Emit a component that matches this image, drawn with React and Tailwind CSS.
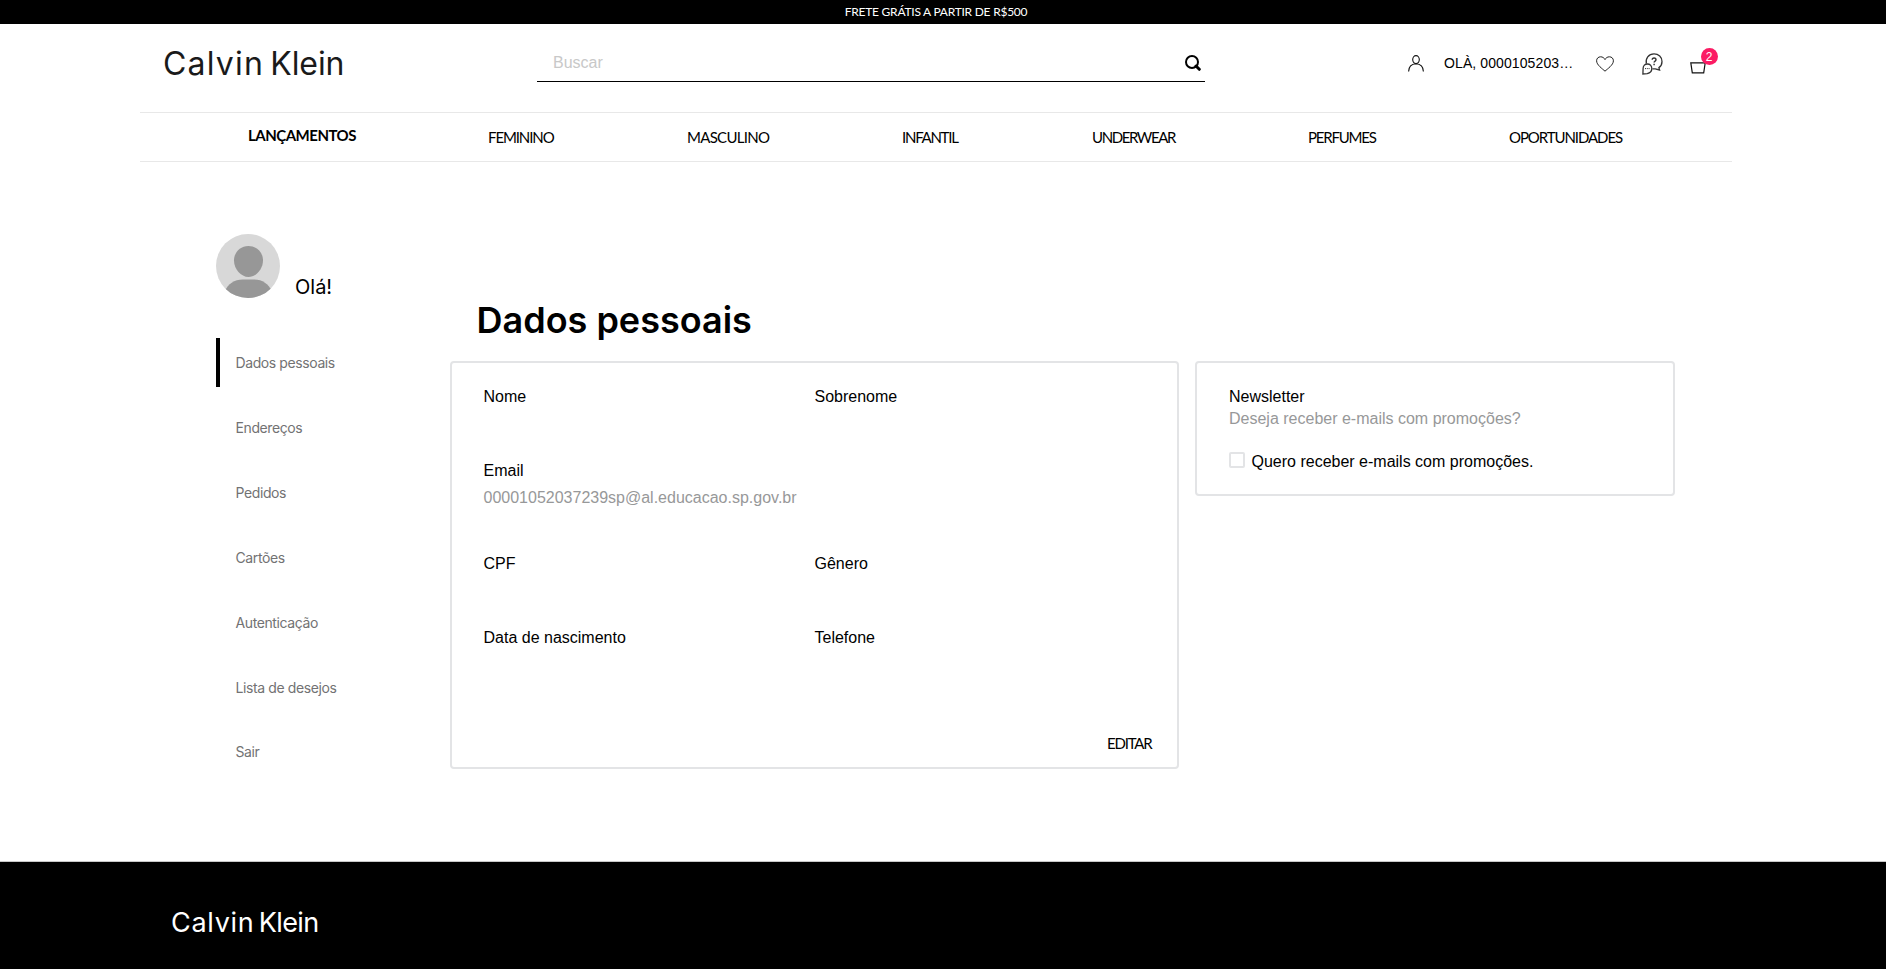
import React from 'react';

const NAV = [
  { label: 'LANÇAMENTOS', cls: 'w-[107px] font-bold tracking-[-0.5px] pb-1' },
  { label: 'FEMININO', cls: 'w-[66px] tracking-[-1.1px]' },
  { label: 'MASCULINO', cls: 'w-[82px] tracking-[-0.7px]' },
  { label: 'INFANTIL', cls: 'w-[57px] tracking-[-1.25px]' },
  { label: 'UNDERWEAR', cls: 'w-[83px] tracking-[-1.4px]' },
  { label: 'PERFUMES', cls: 'w-[68px] tracking-[-1.2px]' },
  { label: 'OPORTUNIDADES', cls: 'w-[113px] tracking-[-1.08px]' },
];

const MENU = ['Dados pessoais', 'Endereços', 'Pedidos', 'Cartões', 'Autenticação', 'Lista de desejos', 'Sair'];

function SearchIcon() {
  return (
    <svg className="h-4 w-4" viewBox="0 0 16 16" fill="none" stroke="#000">
      <circle cx="7" cy="7" r="6" strokeWidth="2" />
      <path d="M11 11 L14.3 14.3" strokeWidth="3" strokeLinecap="round" />
    </svg>
  );
}

function UserIcon() {
  return (
    <svg className="h-[17px] w-4" viewBox="0 0 16 17" fill="none" stroke="#111" strokeWidth="1.1">
      <ellipse cx="8" cy="4.6" rx="3.3" ry="4" />
      <path d="M0.6 16.5 C0.8 11.5 4 9 8 8.8 C12 9 15.2 11.5 15.4 16.5" />
    </svg>
  );
}

function HeartIcon() {
  return (
    <svg className="h-4 w-[18px]" viewBox="0 0 18 16" fill="none" stroke="#222" strokeWidth="1">
      <path d="M9 15.2 C6.5 12.8 0.6 9 0.6 4.8 C0.6 2.3 2.4 0.8 4.6 0.8 C6.6 0.8 8.2 1.9 9 3.6 C9.8 1.9 11.4 0.8 13.4 0.8 C15.6 0.8 17.4 2.3 17.4 4.8 C17.4 9 11.5 12.8 9 15.2 Z" />
    </svg>
  );
}

function HelpIcon() {
  return (
    <svg className="h-[22px] w-[21px]" viewBox="0 0 21 22" fill="none" stroke="#333" strokeWidth="1.3">
      <path d="M4.4 10.6 C3.2 5.6 6.6 0.8 12 0.8 C16.6 0.8 20 4.2 20 8.4 C20 11.2 18.8 13.3 16.9 14.6 L17.6 17 L13.2 15.8 L10.4 15.8" />
      <path d="M0.9 21 L1.1 15.4 C1.1 12.9 3 11 5.4 11 C7.9 11 9.8 12.9 9.8 15.5 C9.8 18.2 7.9 20 5.2 20.6 Z" />
      <path d="M10.2 6.8 C10.2 4.4 14 4.4 14 6.8 C14 8.2 12.1 8 12.1 9.6 M12.1 10.8 V12.2" strokeWidth="1.4" />
      <path d="M3 15.6 H8" strokeWidth="1" strokeDasharray="1 0.8" />
    </svg>
  );
}

function BasketIcon() {
  return (
    <svg className="h-3 w-4" viewBox="0 0 16 12" fill="none" stroke="#111" strokeWidth="1.2">
      <path d="M0.8 0.8 H15.2 L13.7 10.9 H2.3 Z" />
    </svg>
  );
}

function Avatar() {
  return (
    <svg className="h-16 w-16" viewBox="0 0 64 64">
      <defs>
        <clipPath id="avatar-circle">
          <circle cx="32" cy="32" r="32" />
        </clipPath>
      </defs>
      <g clipPath="url(#avatar-circle)">
        <rect width="64" height="64" fill="#d8d8d8" />
        <path d="M32.5 12 C41 12 47 18.5 47 26.5 C47 35 40 43 32.5 43 C25 43 18 35 18 26.5 C18 18.5 24 12 32.5 12 Z" fill="#979797" />
        <path d="M9 57 C12 50 18 45.5 27 45.5 H38 C47 45.5 52 50 56 57 V64 H9 Z" fill="#979797" />
      </g>
    </svg>
  );
}

function Field({ label, value, className = '' }) {
  return (
    <div className={className}>
      <div>{label}</div>
      {value && <div className="mt-[3px] text-[#979899]">{value}</div>}
    </div>
  );
}

export default function App() {
  return (
    <div className="flex h-[969px] w-full flex-col overflow-hidden bg-white font-['Liberation_Sans',sans-serif] text-base leading-6 text-black">
      <div className="h-6 shrink-0 bg-black pr-[14px] text-center font-['Lato',sans-serif] text-xs leading-[23px] tracking-[-0.24px] text-white">
        FRETE GRÁTIS A PARTIR DE R$500
      </div>

      <header className="ml-[140px] w-[1592px] shrink-0">
        <div className="flex h-[88px] items-start">
          <div className="ml-[23px] mt-5 w-[374px] whitespace-nowrap font-['Inter',sans-serif] text-[32px] font-normal leading-[40px] text-[#1a1a1a] [word-spacing:-4px]">
            <span className="tracking-[1.2px]">Calvin </span>
            <span className="-tracking-[0.1px]">Klein</span>
          </div>
          <div className="flex h-[58px] w-[668px] items-start justify-between border-b border-black pl-4 pr-1">
            <span className="mt-[27px] text-[#c8c8c8]">Buscar</span>
            <span className="mt-[31px]"><SearchIcon /></span>
          </div>
          <div className="ml-[203px] flex items-start">
            <span className="mt-[31px]"><UserIcon /></span>
            <span className="ml-5 mt-[27px] w-[134px] whitespace-nowrap text-sm leading-6 tracking-[0.1px]">OLÀ, 0000105203…</span>
            <span className="ml-[18px] mt-8"><HeartIcon /></span>
            <span className="ml-[27.5px] mt-[29px]"><HelpIcon /></span>
            <span className="relative ml-[27px] mt-[38px]">
              <BasketIcon />
              <span className="absolute -top-[14px] left-[11px] flex h-[17px] w-[17px] items-center justify-center rounded-full bg-[#fb1b64] text-xs leading-none text-white">2</span>
            </span>
          </div>
        </div>
        <nav className="flex h-[50px] items-center gap-[133px] border-y border-[#e8e8e8] pb-px pl-[108px] font-['Lato',sans-serif] text-[15px] leading-5">
          {NAV.map((n) => (
            <a key={n.label} className={`shrink-0 whitespace-nowrap ${n.cls}`}>{n.label}</a>
          ))}
        </nav>
      </header>

      <div className="flex h-[699px] shrink-0 pl-[216px]">
        <aside className="w-[234px] pt-[72px] font-['Inter',sans-serif]">
          <div className="flex items-end gap-[15px]">
            <Avatar />
            <span className="text-xl leading-[22px]">Olá!</span>
          </div>
          <ul className="mt-10 flex flex-col gap-4 text-sm tracking-[-0.4px] text-[#727273]">
            {MENU.map((m, i) => (
              <li
                key={m}
                className={`flex h-[49px] items-center border-l-4 pl-[15.5px] last:pb-[2px] ${i === 0 ? 'border-black' : 'border-transparent'}`}
              >
                {m}
              </li>
            ))}
          </ul>
        </aside>

        <main className="pt-[136px]">
          <h1 className="pl-[26.5px] font-['Inter',sans-serif] text-4xl font-semibold leading-[44px]">Dados pessoais</h1>
          <div className="mt-[19px] flex items-start gap-4">
            <section className="flex h-[408px] w-[729px] flex-col rounded border-2 border-[#e3e4e6] px-[31.5px] pt-[22px]">
              <div className="flex h-[74px]">
                <Field label="Nome" className="w-[331px]" />
                <Field label="Sobrenome" />
              </div>
              <div className="h-[93px]">
                <Field label="Email" value="00001052037239sp@al.educacao.sp.gov.br" />
              </div>
              <div className="flex h-[74px]">
                <Field label="CPF" className="w-[331px]" />
                <Field label="Gênero" />
              </div>
              <div className="flex h-[105px]">
                <Field label="Data de nascimento" className="w-[331px]" />
                <Field label="Telefone" />
              </div>
              <a className="mr-[-6px] self-end font-['Lato',sans-serif] text-[15px] leading-6 tracking-[-1.2px]">EDITAR</a>
            </section>
            <section className="h-[135px] w-[480px] rounded border-2 border-[#e3e4e6] px-8 pt-[22px]">
              <div>Newsletter</div>
              <div className="-mt-[2px] text-[#979899]">Deseja receber e-mails com promoções?</div>
              <label className="mt-[19px] flex items-center">
                <span className="-mt-1 h-4 w-4 rounded-[2px] border-2 border-[#e3e4e6]" />
                <span className="ml-[6.5px]">Quero receber e-mails com promoções.</span>
              </label>
            </section>
          </div>
        </main>
      </div>

      <footer className="grow border-t border-[#c8c8c8] bg-black pl-[171px] pt-[43px]">
        <div className="whitespace-nowrap font-['Inter',sans-serif] text-[27px] font-normal leading-[36px] text-white [word-spacing:-4px]">
          <span className="tracking-[0.7px]">Calvin </span>
          <span className="-tracking-[0.6px]">Klein</span>
        </div>
      </footer>
    </div>
  );
}
